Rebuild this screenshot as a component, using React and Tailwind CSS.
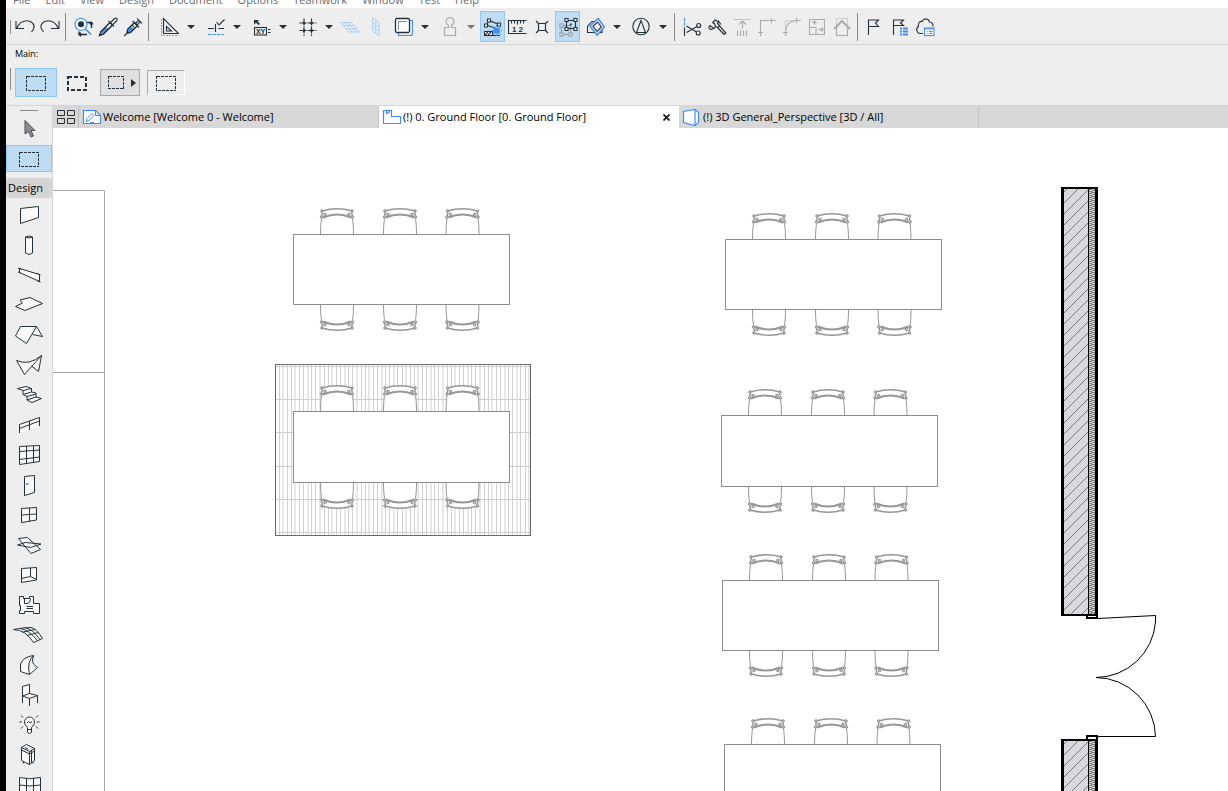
import { useState } from 'react'

const INK = '#25313a'
const BLUE = '#3f8ef5'
const SKY = '#a3cdf5'
const MUTE = '#a9abad'

const MENUS = ['File', 'Edit', 'View', 'Design', 'Document', 'Options', 'Teamwork', 'Window', 'Test', 'Help']

/* ── Toolbar icons, 21×21 ── */
const TOOL_ICONS = {
  undo: <path d="M1 5V12.5H9M1.5 12.5C4 7 8 4.7 12 4.7C17 4.8 20.5 9 18.5 13L16.5 16" />,
  redo: <path d="M19 5V12.5H11M18.5 12.5C16 7 12 4.7 8 4.7C3 4.8 -0.5 9 1.5 13L3.5 16" />,
  find: (
    <>
      <path d="M13 6.5H19M18.5 6V12M16.8 8.3L18.5 6.3L20 8.3M6 15.5V18.5H14M8 16.8L6 18.5L8 20.2" strokeWidth="1.4" />
      <circle cx="8" cy="8.3" r="6" stroke={BLUE} fill="#f4f9ff" />
      <circle cx="8" cy="8.3" r="3" fill={INK} stroke="none" />
      <path d="M12.5 13L18 18.5" stroke={BLUE} strokeWidth="1.6" />
    </>
  ),
  pipette: (
    <>
      <path d="M1.5 19.5L3 15.5L12 6.5L14.5 9L5.5 18Z" fill="#fff" />
      <path d="M2.5 18.5L4 15.5L8 11.2L11 12.5L6 17.5Z" fill={BLUE} stroke="none" />
      <path d="M1.5 19.5L3 15.5L12 6.5L14.5 9L5.5 18Z" />
      <path d="M10.5 5L16 10.5M12 7L16.5 2.5Q18 1.6 18.9 2.6T18.5 5L14.2 9.2" />
    </>
  ),
  syringe: (
    <>
      <path d="M4.5 13.5L11.5 6.5L14.5 9.5L7.5 16.5L4 17.2Z" fill="#fff" />
      <path d="M5 13.5L8 11L11.5 12.5L7.5 16.5L4.3 17Z" fill={BLUE} stroke="none" />
      <path d="M1 20L4.3 16.9L4.5 13.5L11.5 6.5L14.5 9.5L7.5 16.5L4.3 17M9.5 5L16 11.5M12.5 7.5L16 4M14.2 9L17.5 5.7M14 2.3L19 7.3M9 9L11 11" />
    </>
  ),
  square: (
    <>
      <path d="M5.5 2.5V17.5H20.5ZM8.5 10.5V15H13.5Z" />
      <path d="M3.5 3V19.5H20.5" stroke="#c98d72" strokeDasharray="2 1" />
    </>
  ),
  guide: (
    <>
      <path d="M4 12.5H10M14.5 12.5H20M11.5 8V16M12.5 6L15 9L20.5 3.5" />
      <path d="M4 18.5H20" stroke={BLUE} strokeDasharray="3.4 1" />
    </>
  ),
  xy: (
    <>
      <path d="M4 4H9L7.6 5.4L10 8L8.5 9L6 6.8L4 8.5Z" fill={INK} stroke="none" />
      <rect x="4.5" y="11.5" width="12" height="7.5" />
      <text x="10.5" y="17.8" textAnchor="middle" fontSize="7" fontWeight="700" fontFamily="Open Sans, sans-serif" fill={INK} stroke="none">XY</text>
      <path d="M18 13.5H20.5M18 16.5H20.5" />
    </>
  ),
  snap: (
    <>
      <path d="M8 2.5V20M15.5 2.5V20M3.5 7H20.5M3.5 14.5H20.5" strokeDasharray="3 1" />
      <path d="M6.5 7H9.5M14 7H17M6.5 14.5H9.5M14 14.5H17M8 5.5V8.5M15.5 5.5V8.5M8 13V16M15.5 13V16" strokeWidth="1.6" />
    </>
  ),
  planeFlat: <path d="M1 6.5H11.5L19.5 16H8.5ZM4.5 6.5L12 16M8 6.5L16 16M3.5 9.5H14M6 12.8H17" stroke={SKY} strokeWidth="0.9" />,
  planeUp: <path d="M7.5 2L14 6.5V19.5L7.5 15ZM10.7 4.3V17M7.5 6.3L14 10.8M7.5 10.6L14 15.1" stroke={SKY} strokeWidth="0.9" />,
  trace: (
    <>
      <path d="M20.5 5V17.5Q20.5 19.5 18.5 19.5H6.5V16.5" stroke={BLUE} />
      <path d="M17.5 4.5H20.5V7" stroke={BLUE} />
      <rect x="3.5" y="2.5" width="14" height="14" rx="1.5" fill="#fff" strokeWidth="1.3" />
      <path d="M6.5 14V5.5H15" stroke="#8b9094" />
    </>
  ),
  stamp: (
    <path d="M6.5 19.5V11.5H10.5V9.3A4 4 0 1 1 13.5 9.3V11.5H17.5V19.5Z" stroke={MUTE} strokeWidth="1.2" />
  ),
  magic: (
    <>
      <path d="M4 9.5L7 4.5L17 8.5M5.5 9.5L16 13" />
      <path d="M2.5 8h3v3h-3zM5.5 3h3v3h-3zM15.5 7h3v3h-3z" fill="#fff" />
      <rect x="2.5" y="15.5" width="8" height="4" fill="#fff" />
      <path d="M3 19L6 16M6 19L9 16M2.5 19.5H18" />
      <path d="M11.5 12h6v5.5h-6z" fill={BLUE} stroke="none" />
      <path d="M14.5 9V20M9.5 14.7H20M11 11L18.3 18.3M18.3 11L11 18.3" stroke={BLUE} strokeDasharray="2 1" />
    </>
  ),
  ruler: (
    <>
      <path d="M19.5 4.5H1.5V17.5H19.5M4.5 4.5V7.5M7.5 4.5V7.5M10.5 4.5V8.5M13.5 4.5V7.5M16.5 4.5V7.5" />
      <text x="10.5" y="16" textAnchor="middle" fontSize="8" fontWeight="700" fontFamily="Liberation Sans, sans-serif" fill={INK} stroke="none">1 2</text>
    </>
  ),
  node: <path d="M6.5 7.5H13.5V14.5H6.5ZM4 5L6.5 7.5M16 5L13.5 7.5M4 17L6.5 14.5M16 17L13.5 14.5" strokeWidth="1.2" />,
  group: (
    <>
      <path d="M4.5 9.5H13.5V18.5H4.5Z" stroke="#8c9aa5" />
      <path d="M3 8h3v3H3zM3 17h3v3H3zM12 17h3v3h-3z" fill="#eef4f9" stroke="#8c9aa5" />
      <path d="M9.5 4.5H18.5V12.5H9.5Z" />
      <path d="M8 2.5h3v3H8zM17 2.5h3v3h-3zM8 11.5h3v3H8zM17 11.5h3v3h-3z" fill="#fff" />
      <circle cx="13.8" cy="8.5" r="1" fill={INK} stroke="none" />
    </>
  ),
  rotate: (
    <>
      <path d="M3.5 16.5V10.5L8 5.5H14L18 9V16.5Z" />
      <path d="M14 2.5L20.5 11L13 19L6 10Z" stroke={BLUE} strokeWidth="1.5" fill="#eee" />
      <path d="M13.5 6L17.5 11L13 15.5L9 10.3Z" />
    </>
  ),
  cone: (
    <>
      <circle cx="11" cy="10.5" r="8.2" />
      <path d="M11 4.5L6.5 16.5H15.5Z" />
    </>
  ),
  scissors: (
    <>
      <path d="M2.5 2V5.5M2.5 6.5V9.5" stroke={BLUE} />
      <path d="M2.5 11.5V20M4.5 10L14.5 16M4.5 16.5L15 10.5" />
      <circle cx="16.7" cy="9.5" r="2" />
      <circle cx="16.2" cy="17" r="2" />
    </>
  ),
  adjust: (
    <path d="M1.5 11.5L3 9.5L7 12.5L8.5 10.5M1.5 11L3.5 13.5L7 12.5M5.5 7L8 4L11 5.5L10.5 7.5L12.5 9.5L11 11.5L8.5 10.5L7.5 7.5L5.5 7M11 4.5L14 8.5M10.5 11.5L17 18.5L18.8 17L12.5 9.8" strokeWidth="1.2" />
  ),
  extend: (
    <>
      <path d="M1.5 3.5H19" stroke={SKY} />
      <path d="M10.5 5V12.5M7 8.5L10.5 5L14 8.5M5.5 14.5V20M8.5 14.5V20M11.5 14.5V20M14.5 14.5V20" stroke={MUTE} />
    </>
  ),
  corner: <path d="M3.5 20V4.5H19M14.5 2V7M1 16.5H6" stroke={MUTE} />,
  arc: (
    <>
      <path d="M3.5 13V4.5H12" stroke="#d4d4d4" />
      <path d="M3.5 20V16.5C3.5 9 8 4.5 15 4.5H19M14.5 2V7M1 16.5H6" stroke={MUTE} />
    </>
  ),
  resize: (
    <>
      <path d="M2.5 3.5H17.5V18.5H9M2.5 11.5H9V18.5H2.5Z" stroke={MUTE} />
      <path d="M2.5 3.5V11M7.5 9V5M5.5 7L7.5 5L9.5 7M11 13.5H16M14 11.5L16 13.5L14 15.5" stroke={MUTE} />
    </>
  ),
  house: (
    <>
      <path d="M4.5 9V2.5H15.5V9" stroke="#cfcfcf" />
      <path d="M2 13L10 5L18 13" stroke={MUTE} strokeWidth="2" />
      <path d="M4.5 11V19.5H15.5V11" stroke={MUTE} />
    </>
  ),
  flag: <path d="M3.5 19V4H13.5L10.5 7L13.5 10.5H3.5" />,
  flagList: (
    <>
      <path d="M3.5 19V4H13.5L10.5 7L13.5 9.5H3.5" />
      <path d="M10 11.5h2v2h-2zM13 11.5h5v2h-5zM10 14.5h2v2h-2zM13 14.5h5v2h-5zM10 17.5h2v2h-2zM13 17.5h5v2h-5z" fill={BLUE} stroke="none" />
    </>
  ),
  cloud: (
    <>
      <path d="M8 17.5H5.5C2 17.5 0 13 3.5 10.5C2.5 6.5 5.5 5 7 5.5C9 1.5 14 2.5 14.5 6C17 6 18.5 8 18 10.5" />
      <rect x="9.5" y="12" width="9.5" height="7.5" fill="#fff" stroke={BLUE} />
      <path d="M9.5 13H19M11.5 15.5H12.5M14 15.5H17.5M11.5 17.5H12.5M14 17.5H17.5" stroke={BLUE} />
    </>
  ),
}

const TOOLBAR = [
  [{ icon: 'undo', label: 'Undo' }, { icon: 'redo', label: 'Redo' }],
  [
    { icon: 'find', label: 'Find and select' },
    { icon: 'pipette', label: 'Pick up parameters' },
    { icon: 'syringe', label: 'Inject parameters' },
  ],
  [
    { icon: 'square', label: 'Guide lines', menu: true },
    { icon: 'guide', label: 'Snap guides', menu: true },
    { icon: 'xy', label: 'Tracker', menu: true },
    { icon: 'snap', label: 'Grid snap', menu: true },
    { icon: 'planeFlat', label: 'Horizontal plane' },
    { icon: 'planeUp', label: 'Vertical plane' },
    { icon: 'trace', label: 'Trace reference', menu: true },
    { icon: 'stamp', label: 'Gravity', menu: true, off: true },
    { icon: 'magic', label: 'Element snap', toggle: true },
    { icon: 'ruler', label: 'Dimensions' },
    { icon: 'node', label: 'Snap points' },
    { icon: 'group', label: 'Suspend groups', toggle: true },
    { icon: 'rotate', label: 'Rotated view', menu: true },
    { icon: 'cone', label: 'Orientation', menu: true },
  ],
  [
    { icon: 'scissors', label: 'Split' },
    { icon: 'adjust', label: 'Adjust' },
    { icon: 'extend', label: 'Extend' },
    { icon: 'corner', label: 'Intersect' },
    { icon: 'arc', label: 'Fillet' },
    { icon: 'resize', label: 'Resize' },
    { icon: 'house', label: 'Trim to roof' },
  ],
  [
    { icon: 'flag', label: 'Mark-up' },
    { icon: 'flagList', label: 'Issue list' },
    { icon: 'cloud', label: 'Teamwork cloud' },
  ],
]

/* ── Toolbox icons, 32×24 ── */
const DESIGN_TOOLS = [
  ['Wall', <path d="M7.5 5.5L25.5 3.5V14.5L7.5 20.5Z" />],
  ['Column', <path d="M12.5 4Q16 2 19.5 4V20Q16 23 12.5 20ZM12.5 4Q16 6 19.5 4" />],
  ['Beam', <path d="M6.5 5.5L26.5 11.5V18.5L6.5 9.5ZM5 5L8 6M5 9L7.5 10M24.5 10.5L27.5 12M24.5 18L27.5 19M6.5 6V9.5M26.5 11.5V18" />],
  ['Slab', <path d="M7 7L17 4.5L29.5 10.5L12 17.5L2.5 13.5L9.5 10Z" />],
  ['Roof', <path d="M7.5 3.5H23.5L13.5 20.5L2.5 13ZM23.5 3.5L29.5 13.5L19.5 11.5" />],
  ['Shell', <path d="M3.5 7.5Q16 13 28.5 2.5L11.5 21.5ZM28.5 2.5L25.5 18.5L18.5 13" />],
  ['Stair', <path d="M4.5 5.5L13 3.5L18.5 5.5L10 7.5ZM10 7.5V11.5L18.5 9V5.5M10 11.5L14 13.5L23 11V10L18.5 9M14 13.5V17L19 19.5L28.5 15.5L23 14L14 17M23 11V14" />],
  ['Railing', <path d="M6.5 20V11.5L26.5 4.5V13M6.5 15.5L26.5 8M16.5 8V17" />],
  ['Curtain Wall', <path d="M6.5 3.5L26.5 2.5V18.5L6.5 21.5ZM13.5 3.2V20.5M20.5 3V19.5M6.5 8.5L26.5 7M6.5 16.5L26.5 14" />],
  ['Door', <path d="M11.5 3.5L21.5 2.5V19.5L11.5 22.5ZM13 11.5L15.5 10.5" />],
  ['Window', <path d="M8.5 5.5L23.5 4.5V17L8.5 19.5ZM16.5 5V18.5M8.5 12L23.5 11" />],
  ['Skylight', <path d="M5.5 5.5L14.5 4.5L27.5 16.5L18 20.5ZM4.5 12L12.5 9.5L28 11L17.5 14.5Z" />],
  ['Opening', <path d="M8.5 5.5L23.5 4.5V17L8.5 19.5ZM17.5 5V13.5L8.5 15.5M17.5 13.5L23.5 16.5" />],
  ['Zone', <path d="M6.5 3.5H10.5V5.5H16.5V3.5H20.5V10.5H26.5V20.5H20.5V18.5H11.5V20.5H6.5V17.5H7.5V12.5H6.5ZM17.5 5.5Q17.5 11.5 11.5 10.5V5.5M13.5 13.5H20M13.5 15.5H20" />],
  ['Mesh', <path d="M0.5 6.5Q10 4.5 18 4.5Q23 5 29.5 15.5L20.5 19.5Q13 7 0.5 6.5ZM7 5.6Q15 6 24.5 17.7M12 4.8Q20 6 27 16.7M10 9L22 6.5M14 12.5L25.5 9.5" />],
  ['Morph', <path d="M7.5 18.5V11Q10 4 20.5 2.5Q18 10 22 12.5L24.5 14.5L16.5 21.5ZM20.5 2.5Q13.5 9 16.5 21.5" />],
  ['Object', <path d="M9.5 20V3.5L16.5 1.5V10.5M9.5 13L16.5 10.5L24.5 12.5L16.5 15.5ZM16.5 15.5V23M24.5 12.5V20" />],
  ['Lamp', <path d="M14.5 14.5Q11.5 12 11.5 9A5 5 0 0 1 21.5 9Q21.5 12 18.5 14.5V19.5Q16.5 21.5 14.5 19.5ZM14.5 16.5H18.5M14 10L15.5 8.5L17 10L19 8.5M6.5 9H9M24 9H26.5M8 2.5L10 4.5M25 2.5L23 4.5M8 15.5L10 13.5M25 15.5L23 13.5" />],
  ['Equipment', <path d="M8.5 4.5L13.5 1.5L21.5 5.5V17.5L16.5 21.5L8.5 17.5ZM8.5 4.5L16.5 8.5L21.5 5.5M16.5 8.5V21.5M8.5 7L16.5 11L21.5 8M18.5 7.5V20M12 4.5L15 6M10.5 18.5V20.5M20 19V20.5" />],
  ['Curtain Panel', <path d="M6.5 4.5Q16.5 7 27.5 4.5V19Q16.5 21 6.5 19ZM13.5 5.5V20M20.5 5.5V20M6.5 12Q16.5 14 27.5 12" />],
]

const TABS = [
  { id: 'welcome', text: 'Welcome [Welcome 0 - Welcome]' },
  { id: 'floor', text: '(!) 0. Ground Floor [0. Ground Floor]' },
  { id: 'persp', text: '(!) 3D General_Perspective [3D / All]' },
]

const TAB_ICONS = {
  welcome: (
    <>
      <path d="M1.5 2.5H13.5L18.5 7.5V15.5H1.5Z" fill="#fff" />
      <path d="M13.5 2.5V7.5H18.5M4 13.5L5 10.5L10 5.5L12 7.5L7 12.5ZM8 14.5H12" strokeWidth="1" />
    </>
  ),
  floor: <path d="M1.5 2.5H9.5V8.5H18.5V15.5H1.5ZM4.5 2.5V5.5Q7.5 5 7.5 2.5" fill="#fff" />,
  persp: <path d="M1.5 3.5L13 1.5V17.5L1.5 14.5ZM13 1.5L16.5 4.5V14.5L13 17.5" fill="#fff" />,
}

function ToolIcon({ name }) {
  return (
    <svg width="21" height="21" viewBox="0 0 21 21" fill="none" stroke={INK} strokeWidth="1.1" className="shrink-0">
      {TOOL_ICONS[name]}
    </svg>
  )
}

function ToolButton({ tool }) {
  const [on, setOn] = useState(Boolean(tool.toggle))
  const active = tool.toggle && on

  if (tool.menu) {
    return (
      <div className="ml-px flex h-[31px] shrink-0">
        <button aria-label={tool.label} className="flex w-[27px] items-center justify-center">
          <ToolIcon name={tool.icon} />
        </button>
        <button aria-label={`${tool.label} options`} className="flex w-[18px] items-center justify-center">
          <svg width="8" height="4" viewBox="0 0 8 4" fill={tool.off ? '#777' : INK}>
            <path d="M0 0H8L4 4Z" />
          </svg>
        </button>
      </div>
    )
  }
  return (
    <button
      aria-label={tool.label}
      aria-pressed={tool.toggle ? on : undefined}
      onClick={() => setOn(!on)}
      className={`flex h-[31px] w-[25px] shrink-0 items-center justify-center ${
        active ? 'bg-[#bedcf3] outline outline-1 -outline-offset-1 outline-[#8fc7f7]' : ''
      }`}
    >
      <ToolIcon name={tool.icon} />
    </button>
  )
}

function Toolbar() {
  return (
    <div className="flex h-[37px] shrink-0 items-center overflow-hidden border-b border-[#d6d6d6] bg-[#eee] pt-px pl-1">
      <span className="mr-[2px] h-[14px] w-px bg-[#8a8a8a]" />
      {TOOLBAR.map((group, i) => (
        <div key={i} className="flex items-center">
          {i > 0 && <span className="mr-[5px] ml-[2px] h-7 w-px bg-[#8a8a8a]" />}
          {group.map((tool) => <ToolButton key={tool.icon} tool={tool} />)}
        </div>
      ))}
    </div>
  )
}

function Marquee({ w = 20, h = 15, bold }) {
  return (
    <svg width={w} height={h} viewBox={`0 0 ${w} ${h}`} fill="none" stroke={INK}
      strokeWidth={bold ? 2 : 1} strokeDasharray={bold ? '4 2' : '3 1'} shapeRendering="crispEdges">
      <rect x={bold ? 1 : 0.5} y={bold ? 1 : 0.5} width={bold ? w - 2 : w - 1} height={bold ? h - 2 : h - 1} />
    </svg>
  )
}

function InfoBox() {
  return (
    <section className="flex h-[61px] shrink-0 flex-col border-b border-[#d6d6d6] bg-[#eee]">
      <h2 className="pt-[2px] pl-[9px] text-[9px] leading-[14px] text-black">Main:</h2>
      <div className="flex items-center pt-[7px] pl-1">
        <span className="mr-1 h-[22px] w-px self-start bg-[#8a8a8a]" />
        <button aria-label="Polygonal marquee" className="flex h-[29px] w-[42px] items-center justify-center border border-[#8fc7f7] bg-[#bedcf3] pt-[2px]">
          <Marquee />
        </button>
        <button aria-label="All stories marquee" className="flex h-[29px] w-10 items-center justify-center pt-[2px]">
          <Marquee bold />
        </button>
        <button aria-label="Marquee geometry" className="ml-[3px] flex h-[27px] w-10 items-center justify-between border border-[#a9a9a9] bg-[#e0e0e0] pr-[3px] pl-[7px]">
          <Marquee w={16} h={13} />
          <svg width="5" height="8" viewBox="0 0 5 8" fill={INK}><path d="M0 0L5 4L0 8Z" /></svg>
        </button>
        <button aria-label="Marquee settings" className="ml-[7px] flex h-[25px] w-[38px] items-center justify-center border border-t-[#a9a9a9] border-r-white border-b-white border-l-[#a9a9a9] pt-[2px]">
          <Marquee />
        </button>
      </div>
    </section>
  )
}

function Toolbox() {
  return (
    <aside className="flex w-[47px] shrink-0 flex-col overflow-hidden border-r border-[#d6d6d6] bg-[#eee]">
      <span className="mt-1 h-px w-[18px] shrink-0 self-center bg-[#8a8a8a]" />
      <button aria-label="Arrow" className="flex h-[34px] shrink-0 items-center justify-center">
        <svg width="14" height="20" viewBox="0 0 14 20" fill="#8b8d90" stroke="#4b5157">
          <path d="M3 2.5L13 12.5H9L11.5 18L9 19L6.5 13.5L3 16Z" />
        </svg>
      </button>
      <button aria-label="Marquee" className="flex h-[27px] shrink-0 items-center justify-center border border-[#8fc7f7] bg-[#bedcf3] pt-[2px]">
        <Marquee />
      </button>
      <h2 className="mt-[6px] mb-[2px] h-5 shrink-0 rounded-[3px] bg-[#d5d5d5] pl-[2px] text-[11px] leading-5 text-black">Design</h2>
      {DESIGN_TOOLS.map(([label, shape]) => (
        <button key={label} aria-label={label} className="flex h-[30px] shrink-0 items-center justify-center">
          <svg width="32" height="24" viewBox="0 0 32 24" fill="#fafafa" stroke={INK} strokeWidth="1">
            {shape}
          </svg>
        </button>
      ))}
    </aside>
  )
}

function TabBar() {
  const [current, setCurrent] = useState('floor')

  return (
    <div className="flex h-[22px] shrink-0 bg-[#d8d8d8]">
      <button aria-label="Tab overview" className="flex w-[26px] shrink-0 items-center justify-center border-r border-[#bcbcbc]">
        <svg width="18" height="14" viewBox="0 0 18 14" fill="none" stroke={INK}>
          <path d="M0.5 0.5H7.5V5.5H0.5ZM10.5 0.5H17.5V5.5H10.5ZM0.5 8.5H7.5V13.5H0.5ZM10.5 8.5H17.5V13.5H10.5Z" />
        </svg>
      </button>
      {TABS.map((tab) => (
        <div key={tab.id} className={`flex w-[300px] items-center border-r pr-2 pl-[3px] ${
          tab.id === current ? 'border-white bg-white' : 'border-[#c6c6c6]'
        }`}>
          <button onClick={() => setCurrent(tab.id)} className="flex min-w-0 flex-1 items-center gap-px text-left text-[11px] leading-4 whitespace-nowrap text-black">
            <svg width="20" height="19" viewBox="0 0 20 19" fill="none" stroke={BLUE} strokeWidth="1.2" className="shrink-0">
              {TAB_ICONS[tab.id]}
            </svg>
            {tab.text}
          </button>
          {tab.id === current && (
            <button aria-label="Close tab">
              <svg width="7" height="7" viewBox="0 0 7 7" stroke="#111" strokeWidth="1.6"><path d="M0.5 0.5L6.5 6.5M6.5 0.5L0.5 6.5" /></svg>
            </button>
          )}
        </div>
      ))}
    </div>
  )
}

/* ── Floor plan ── */
const SEATS = [44, 107, 169.5]
const TABLES = [
  { x: 240, y: 106, h: 70 },
  { x: 240, y: 283, h: 71 },
  { x: 672, y: 111, h: 70 },
  { x: 668, y: 287, h: 71 },
  { x: 669, y: 452, h: 70 },
  { x: 671, y: 616, h: 70 },
]

// Seen from above, back rest pointing up, seat edge on y = 0
function Chair({ x, y, flip }) {
  return (
    <g transform={`translate(${x} ${y}) scale(1 ${flip ? -1 : 1})`} fill="none" stroke="#979797">
      <path d="M-16.5 0L-15.5 -17L-16 -23Q0 -28 16 -23L15.5 -17L16.5 0" fill="#fff" stroke="none" />
      <path d="M-16.5 0Q-16.5 -9 -15.5 -16M16.5 0Q16.5 -9 15.5 -16" />
      <path d="M-15 -23Q0 -27.5 15 -23" strokeWidth="1.7" />
      <path d="M-14 -16.5Q0 -22.5 14 -16.5" strokeWidth="2" />
      <path d="M-14.5 -23L-15.5 -17M14.5 -23L15.5 -17" strokeWidth="1.5" />
      <g fill="#bbb">
        <circle cx="-15" cy="-23" r="1.3" />
        <circle cx="15" cy="-23" r="1.3" />
        <circle cx="-12" cy="-19.5" r="1.4" />
        <circle cx="12" cy="-19.5" r="1.4" />
        <circle cx="-15.5" cy="-17" r="1.3" />
        <circle cx="15.5" cy="-17" r="1.3" />
      </g>
    </g>
  )
}

function Table({ x, y, h }) {
  return (
    <g>
      {SEATS.map((s) => <Chair key={`t${s}`} x={x + s} y={y} />)}
      {SEATS.map((s) => <Chair key={`b${s}`} x={x + s} y={y + h + 1} flip />)}
      <rect x={x + 0.5} y={y + 0.5} width="216" height={h} fill="#fff" stroke="#8c8c8c" />
    </g>
  )
}

function Rug() {
  const planks = Array.from({ length: 62 }, (_, i) => 226 + i * 4.1)
  const joints = [238, 271, 304, 338, 371, 404]
  return (
    <g shapeRendering="crispEdges">
      <rect x="222" y="236" width="256" height="172" fill="#fff" />
      {planks.map((x, i) => (
        <path key={x} d={`M${x} 236V407`} stroke={i % 3 === 1 ? '#e8e8e8' : '#d0d0d2'} strokeWidth={i % 3 === 1 ? 2 : 1} />
      ))}
      {joints.map((y) => <path key={y} d={`M222 ${y + 0.5}H478`} stroke="#cdcdcf" />)}
      <rect x="222.5" y="236.5" width="255" height="171" fill="none" stroke="#6a6a6c" />
    </g>
  )
}

function Wall({ y, h }) {
  const strokes = Array.from({ length: Math.ceil(h / 11) + 4 }, (_, i) => y - 5 + i * 11)
  const id = `wall-${y}`
  return (
    <g>
      <clipPath id={id}><rect x="1011" y={y + 2} width="24" height={h - 4} /></clipPath>
      <rect x="1008" y={y} width="37" height={h} fill="#000" />
      <rect x="1011" y={y + 2} width="24" height={h - 4} fill="#d8d9dd" />
      <g clipPath={`url(#${id})`} stroke="#7b7b7d">
        {strokes.map((s) => <path key={s} d={`M1010 ${s}L1036 ${s - 26}`} />)}
      </g>
      <rect x="1036" y={y + 2} width="6" height={h - 4} fill="url(#insulation)" />
    </g>
  )
}

function FloorPlan() {
  return (
    <svg className="block h-full w-full" role="img" aria-label="Ground floor plan">
      <defs>
        <pattern id="insulation" x="1036" y="0" width="6" height="4" patternUnits="userSpaceOnUse">
          <rect width="6" height="4" fill="#7f8082" />
          <path d="M0 0.5H2M3 1.5H5M0 2.5H3M3 3.5H6" stroke="#d9d9d9" />
        </pattern>
      </defs>
      <path d="M0 62.5H51.5V3000M0 244.5H51" fill="none" stroke="#a8a8a8" />
      <Rug />
      {TABLES.map((t) => <Table key={`${t.x}-${t.y}`} {...t} />)}
      <Wall y={59} h={429} />
      <Wall y={611} h={400} />
      <g fill="#fff" stroke="#000">
        <rect x="1034" y="487" width="10" height="3" strokeWidth="2" />
        <rect x="1034" y="608" width="10" height="4" strokeWidth="2" />
        <path d="M1045 490.5L1102.5 487.5V494A60 60 0 0 1 1043 549.5A60 60 0 0 1 1102.5 608.5H1045" fill="none" />
      </g>
    </svg>
  )
}

export default function App() {
  return (
    <div className="flex h-screen overflow-hidden bg-white font-['Open_Sans','Noto_Sans',sans-serif]">
      <div className="w-[6px] shrink-0 bg-black" />
      <div className="flex min-w-0 flex-1 flex-col">
        <nav className="flex h-2 shrink-0 items-end gap-[15px] overflow-hidden pl-[7px] text-[11px] leading-4 text-[#6b6b6b]">
          {MENUS.map((m) => <button key={m}>{m}</button>)}
        </nav>
        <Toolbar />
        <InfoBox />
        <div className="flex min-h-0 flex-1">
          <Toolbox />
          <div className="flex min-w-0 flex-1 flex-col">
            <TabBar />
            <main className="min-h-0 flex-1 bg-white">
              <FloorPlan />
            </main>
          </div>
        </div>
      </div>
    </div>
  )
}
